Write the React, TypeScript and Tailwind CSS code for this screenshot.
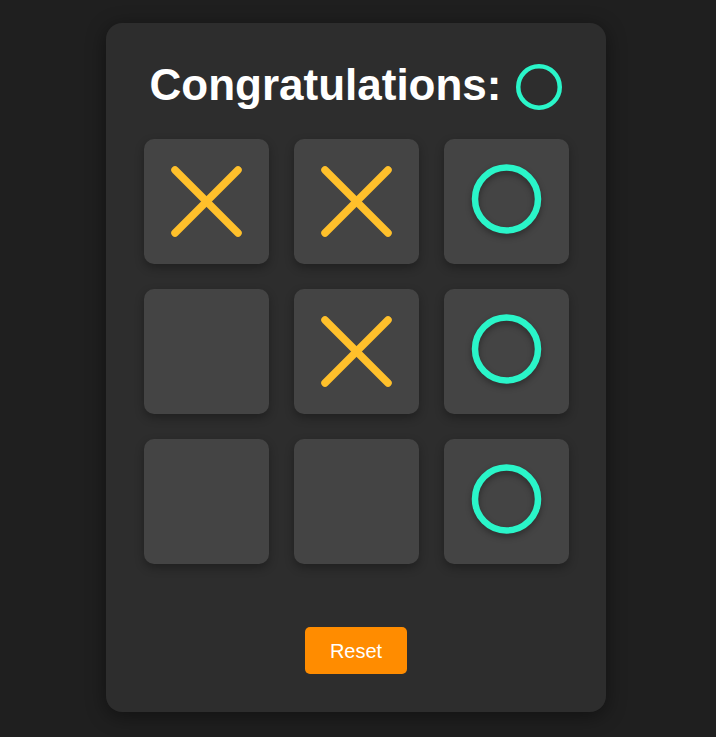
import React from "react";

type Cell = "X" | "O" | null;

const board: Cell[] = ["X", "X", "O", null, "X", "O", null, null, "O"];

function XMark() {
  return (
    <svg width="125" height="125" viewBox="0 0 125 125">
      <line x1="31" y1="31" x2="94" y2="94" stroke="#ffc02b" strokeWidth="7.5" strokeLinecap="round" />
      <line x1="94" y1="31" x2="31" y2="94" stroke="#ffc02b" strokeWidth="7.5" strokeLinecap="round" />
    </svg>
  );
}

function OMark() {
  return (
    <svg width="125" height="125" viewBox="0 0 125 125" className="drop-shadow-[0_3px_3px_rgba(0,0,0,0.35)]">
      <circle cx="62.5" cy="60" r="31.5" fill="none" stroke="#2af5c9" strokeWidth="6.5" />
    </svg>
  );
}

export default function App() {
  return (
    <div
      className="min-h-[737px] w-full bg-[#1f1f1f] flex justify-center pr-[4px] pt-[23px]"
      style={{ fontFamily: '"Liberation Sans", Arial, sans-serif' }}
    >
      <div className="w-[500px] h-[689px] bg-[#2d2d2d] rounded-[16px] shadow-[0_4px_20px_rgba(0,0,0,0.45)] flex flex-col items-center pt-[37px]">
        <div className="h-[50px] flex items-center gap-[15px] mb-[29px]">
          <h1 className="text-[44px] font-bold text-white leading-none">Congratulations:</h1>
          <svg width="46" height="46" viewBox="0 0 46 46" className="mt-[3px]">
            <circle cx="23" cy="23" r="20.75" fill="none" stroke="#2af5c9" strokeWidth="4.5" />
          </svg>
        </div>
        <div className="grid grid-cols-[125px_125px_125px] gap-[25px]">
          {board.map((c, i) => (
            <div
              key={i}
              className="w-[125px] h-[125px] bg-[#444444] rounded-[10px] shadow-[0_4px_10px_rgba(0,0,0,0.3)] flex items-center justify-center"
            >
              {c === "X" ? <XMark /> : c === "O" ? <OMark /> : null}
            </div>
          ))}
        </div>
        <button className="mt-[63px] w-[102px] h-[47px] bg-[#ff8c00] text-white text-[20px] rounded-[5px] flex items-center justify-center">
          Reset
        </button>
      </div>
    </div>
  );
}
